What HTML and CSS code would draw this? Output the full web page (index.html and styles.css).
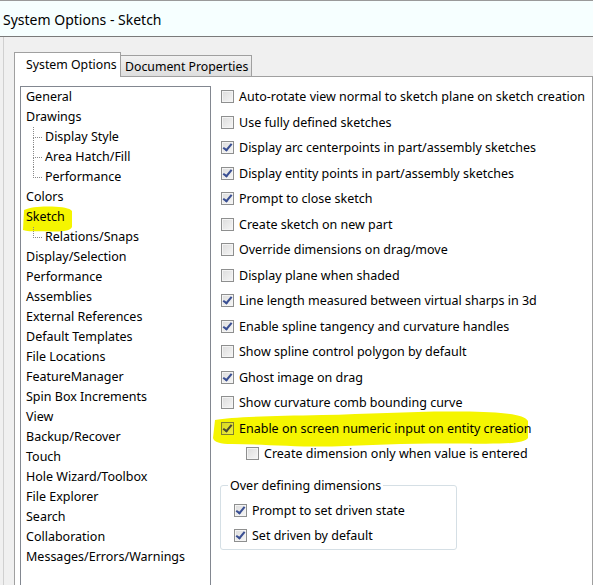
FILE: index.html
```html
<!DOCTYPE html>
<html>
<head>
<meta charset="utf-8">
<link rel="stylesheet" href="styles.css">
</head>
<body>
<div class="titlebar"><span class="title">System Options - Sketch</span></div>
<div class="frame">
  <div class="tabs">
    <div class="tab active">System Options</div>
    <div class="tab">Document Properties</div>
  </div>
  <div class="panel">
    <ul class="tree">
      <li>General</li>
      <li>Drawings</li>
      <li class="kids">
        <ul>
          <li class="child">Display Style</li>
          <li class="child">Area Hatch/Fill</li>
          <li class="child">Performance</li>
        </ul>
      </li>
      <li>Colors</li>
      <li class="hl-item"><svg class="hl hl-sketch" width="52" height="28" viewBox="0 0 52 28"><path d="M2 5 C8 2 20 1 30 1.5 C40 2 48 3 50 6 L50 22 C48 26 40 27 28 26.5 C16 26 6 27 1 25 Z" fill="#f5f500"/></svg><span>Sketch</span></li>
      <li class="kids">
        <ul>
          <li class="child">Relations/Snaps</li>
        </ul>
      </li>
      <li>Display/Selection</li>
      <li>Performance</li>
      <li>Assemblies</li>
      <li>External References</li>
      <li>Default Templates</li>
      <li>File Locations</li>
      <li>FeatureManager</li>
      <li>Spin Box Increments</li>
      <li>View</li>
      <li>Backup/Recover</li>
      <li>Touch</li>
      <li>Hole Wizard/Toolbox</li>
      <li>File Explorer</li>
      <li>Search</li>
      <li>Collaboration</li>
      <li>Messages/Errors/Warnings</li>
    </ul>
    <div class="options">
      <div class="opt"><span class="cb"></span>Auto-rotate view normal to sketch plane on sketch creation</div>
      <div class="opt"><span class="cb"></span>Use fully defined sketches</div>
      <div class="opt"><span class="cb on"></span>Display arc centerpoints in part/assembly sketches</div>
      <div class="opt"><span class="cb on"></span>Display entity points in part/assembly sketches</div>
      <div class="opt"><span class="cb on"></span>Prompt to close sketch</div>
      <div class="opt"><span class="cb"></span>Create sketch on new part</div>
      <div class="opt"><span class="cb"></span>Override dimensions on drag/move</div>
      <div class="opt"><span class="cb"></span>Display plane when shaded</div>
      <div class="opt"><span class="cb on"></span>Line length measured between virtual sharps in 3d</div>
      <div class="opt"><span class="cb on"></span>Enable spline tangency and curvature handles</div>
      <div class="opt"><span class="cb"></span>Show spline control polygon by default</div>
      <div class="opt"><span class="cb on"></span>Ghost image on drag</div>
      <div class="opt"><span class="cb"></span>Show curvature comb bounding curve</div>
      <div class="opt hl-row"><svg class="hl hl-enable" width="318" height="36" viewBox="0 0 318 36"><path d="M3 9 C20 6 60 5 110 4 C160 3 200 0 250 0.5 C290 1 312 3 316 10 L316 27 C312 33 290 33 250 32.5 C200 32 160 34 120 35.5 C80 36 50 33 20 33 C8 33 2 31 1 27 Z" fill="#f5f500"/></svg><span class="cb on hlcb"></span><span class="lbl">Enable on screen numeric input on entity creation</span></div>
      <div class="opt sub"><span class="cb"></span>Create dimension only when value is entered</div>
      <fieldset class="group">
        <legend>Over defining dimensions</legend>
        <div class="opt"><span class="cb on"></span>Prompt to set driven state</div>
        <div class="opt"><span class="cb on"></span>Set driven by default</div>
      </fieldset>
    </div>
  </div>
</div>
</body>
</html>
```

FILE: styles.css
```css
html, body {
  margin: 0;
  padding: 0;
}
body {
  width: 593px;
  height: 585px;
  overflow: hidden;
  background: #f0f0f0;
  font-family: "Noto Sans", "Open Sans", sans-serif;
  font-size: 12.5px;
  color: #000;
}
.titlebar {
  height: 35px;
  border-top: 1px solid #9a9a9a;
  border-bottom: 1px solid #7a7a7a;
  background: #f6ffff;
  display: flex;
  align-items: center;
  padding-left: 3px;
}
.title {
  font-size: 14px;
  margin-top: 2px;
}
.frame {
  margin-left: 3px;
  border-left: 1px solid #d0d0d0;
  padding: 15px 0 0 10px;
  height: 533px;
  overflow: hidden;
}
.tabs {
  display: flex;
  align-items: flex-end;
  height: 24px;
  position: relative;
  z-index: 1;
}
.tab {
  box-sizing: border-box;
  height: 21px;
  padding: 0 3px 0 4px;
  border: 1px solid #a0a0a0;
  border-bottom: none;
  background: linear-gradient(#f2f2f2, #dedede);
  line-height: 21px;
  font-size: 12.3px;
  margin-left: -1px;
}
.tab.active {
  height: 25px;
  width: 107px;
  background: #fff;
  padding: 0 0 0 11px;
  line-height: 23px;
  margin-left: 0;
  margin-bottom: -1px;
}
.panel {
  border: 1px solid #a0a0a0;
  border-bottom: none;
  background: #fff;
  display: flex;
  align-items: flex-start;
  padding: 9px 0 0 5px;
  height: 500px;
  gap: 10px;
}
.tree {
  list-style: none;
  margin: 0;
  padding: 0 0 0 5px;
  width: 184px;
  height: 520px;
  border: 1px solid #828790;
  flex: none;
}
.tree li {
  height: 20px;
  line-height: 20px;
  white-space: nowrap;
}
.tree li.kids {
  height: auto;
}
.tree ul {
  list-style: none;
  margin: 0 0 0 7px;
  padding: 0;
}
.tree li.child {
  position: relative;
  padding-left: 12px;
}
.child::before {
  content: "";
  position: absolute;
  left: 0;
  top: 0;
  width: 8px;
  height: 10px;
  border-left: 1px dotted #8a8a8a;
  border-bottom: 1px dotted #8a8a8a;
}
.child:not(:last-child)::after {
  content: "";
  position: absolute;
  left: 0;
  top: 10px;
  bottom: 0;
  border-left: 1px dotted #8a8a8a;
}
.hl-item {
  position: relative;
}
.hl-item span, .hl-row .lbl, .hl-row .cb {
  position: relative;
}
.hl {
  position: absolute;
}
.hl-sketch {
  left: -4px;
  top: -2px;
}
.options {
  margin-top: -2px;
}
.opt {
  height: 25.5px;
  display: flex;
  align-items: center;
  white-space: nowrap;
}
.hl-row {
  position: relative;
}
.hl-enable {
  left: -9px;
  top: -5px;
}
.opt.sub {
  padding-left: 25px;
}
.cb {
  box-sizing: border-box;
  width: 13px;
  height: 13px;
  border: 1px solid #8e8f8f;
  background: linear-gradient(135deg, #dcdcdc, #f6f6f6);
  box-shadow: inset 0 0 0 1px #f4f4f4;
  margin-right: 5px;
  flex: none;
  position: relative;
}
.cb.on::after {
  content: "";
  position: absolute;
  left: 3px;
  top: 0px;
  width: 3px;
  height: 7px;
  border-right: 2px solid #3a4f93;
  border-bottom: 2px solid #3a4f93;
  transform: rotate(40deg) skewY(-5deg);
}
.cb.hlcb {
  background: linear-gradient(135deg, #d8d820, #eeee40);
  border-color: #7e7e30;
  box-shadow: none;
}
.cb.hlcb::after {
  border-color: #4a4a30;
}
.group {
  margin: 12px 0 0 -1px;
  width: 237px;
  box-sizing: border-box;
  border: 1px solid #d5dfe5;
  border-radius: 3px;
  padding: 5px 0 0 13px;
}
.group legend {
  padding: 0 2px;
  margin-left: -6px;
  line-height: 14px;
}
```
